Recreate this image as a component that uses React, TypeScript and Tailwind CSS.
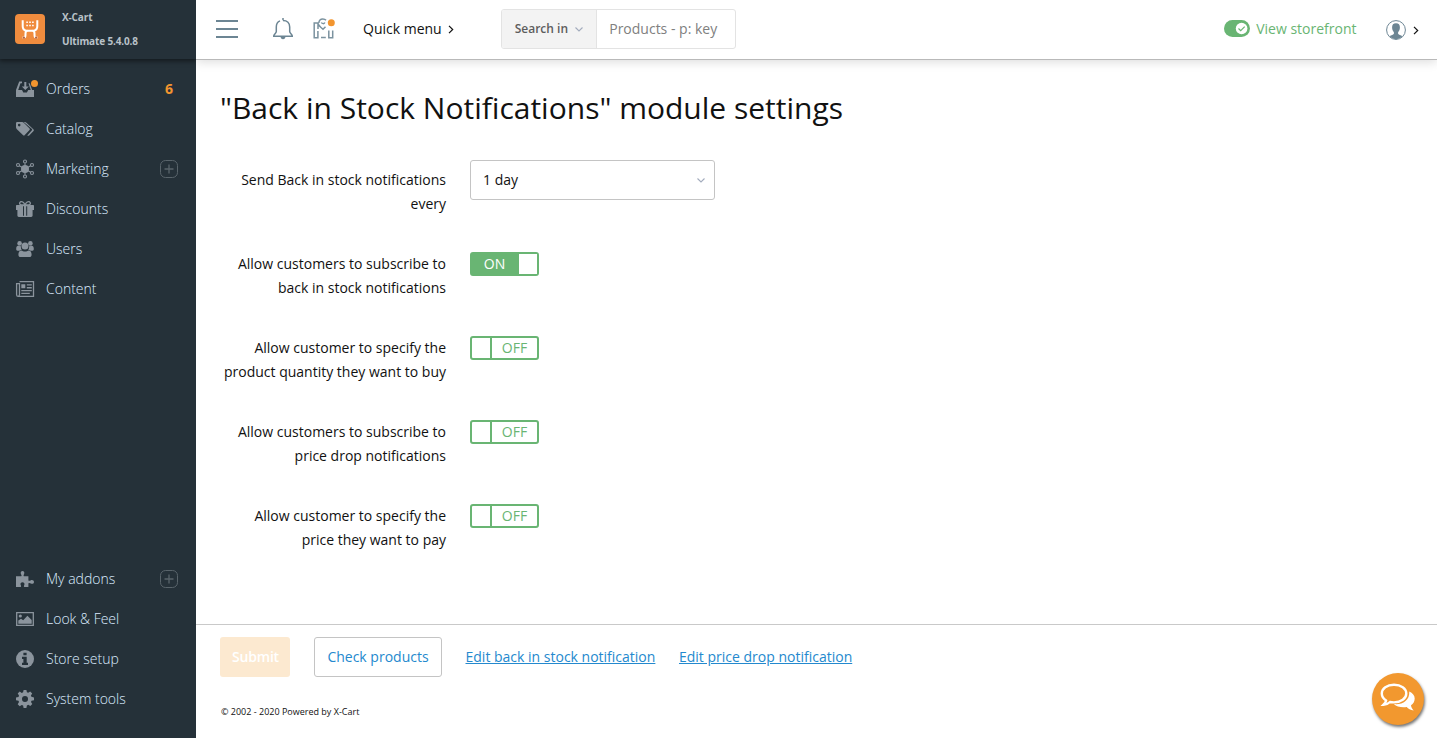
import React from "react";

type IconProps = { children: React.ReactNode };

const Glyph = ({ children }: IconProps) => (
  <svg width="18" height="18" viewBox="0 0 18 18" fill="#8b949d" className="block shrink-0 overflow-visible">
    {children}
  </svg>
);

const OrdersIcon = () => (
  <Glyph>
    <path d="M3.2 1.6H6v1.6H4.500L2.200 10H6l1.3 2.6h3.600L12.200 10H18v7H0v-7z" />
    <path d="M8.300 2h2v4.400h2.500L9.300 9.900 5.800 6.400h2.500z" />
    <path d="M12.500 3.200h1.200L16.200 10h-1.500z" />
    <circle cx="18.500" cy="3.500" r="3.500" fill="#f2952f" />
  </Glyph>
);

const CatalogIcon = () => (
  <Glyph>
    <path
      fillRule="evenodd"
      d="M0 3.200C0 2.400.7 2 1.400 2H6c.8 0 1.400.3 2 .9l5.300 5.300c.7.700.7 1.300 0 2L8.800 15c-.6.700-1.300.7-1.900 0L.9 9.200C.3 8.600 0 8 0 7.200zM3.200 3.800a1.300 1.300 0 1 0 0 2.600 1.300 1.300 0 0 0 0-2.600z"
    />
    <path d="M7.700 2h1c.8 0 1.400.3 2 .9l6.600 6.300c.8.700.8 1.300 0 2l-4.100 4.200c-.7.600-1.300.6-1.900 0l4.600-5.100c.4-.5.4-.9 0-1.300z" />
  </Glyph>
);

const MarketingIcon = () => (
  <Glyph>
    <circle cx="9" cy="9" r="4" />
    <g fill="none" stroke="#8b949d" strokeWidth="1.100">
      <path d="M9 3.300v11.400M3.300 5.800l11.400 6.400M3.300 12.200l11.400-6.400" />
      <circle cx="9" cy="1.500" r="1.500" />
      <circle cx="9" cy="16.500" r="1.500" />
      <circle cx="2" cy="5" r="1.500" />
      <circle cx="16" cy="5" r="1.500" />
      <circle cx="2" cy="13" r="1.500" />
      <circle cx="16" cy="13" r="1.500" />
    </g>
  </Glyph>
);

const DiscountsIcon = () => (
  <Glyph>
    <path d="M1 5h16c.6 0 1 .4 1 1v4h-1.400v5.600c0 .8-.6 1.400-1.400 1.400H2.800c-.8 0-1.400-.6-1.400-1.400V10H0V6c0-.6.4-1 1-1z" />
    <path d="M7 6.300h1v9.400H7zM10.200 6.300h1v9.400h-1z" fill="#253139" />
    <path d="M9 5C7.800 2 5.800 1 4.300 1.900 3 2.900 3.500 5 5.500 5zM9 5c1.200-3 3.200-4 4.700-3.100C15 2.900 14.500 5 12.500 5z" fill="none" stroke="#8b949d" strokeWidth="1.300" />
  </Glyph>
);

const UsersIcon = () => (
  <Glyph>
    <circle cx="3.600" cy="3.400" r="2.300" />
    <circle cx="14.400" cy="3.400" r="2.300" />
    <circle cx="9" cy="6" r="3.500" />
    <path d="M.2 8.800c0-2 .8-3 2-3 1 0 1.900.6 2.700.3-.1 2 .3 3 1 3.700-1 0-1.800.3-2.400.9H1.500C.7 10.700.200 10.200.2 8.800zM17.800 8.800c0-2-.8-3-2-3-1 0-1.900.6-2.700.3.1 2-.3 3-1 3.700 1 0 1.800.3 2.400.9h2c.8 0 1.300-.5 1.300-1.900zM5.300 10.500c1 .5 2.300 1 3.700 1s2.700-.5 3.700-1c2 0 2.900 1.700 2.900 4.200 0 1.400-.9 2.300-2.200 2.300H4.600c-1.300 0-2.200-.9-2.200-2.300 0-2.500.9-4.200 2.900-4.200z" />
  </Glyph>
);

const ContentIcon = () => (
  <Glyph>
    <path d="M3.500 1.700h14v14.600H2.200C1.200 16.300.6 15.600.6 14.700V3.700h2.900v10.800c0 1-.5 1.700-1.300 1.700" fill="none" stroke="#8b949d" strokeWidth="1.300" />
    <path d="M5.300 4.200h4v4.100h-4zM10.800 4.200h5v1.300h-5zM10.800 7.100h5v1.300h-5zM5.300 9.900h10.500v1.300H5.300zM5.300 12.700h8.500V14H5.300z" />
  </Glyph>
);

const AddonsIcon = () => (
  <Glyph>
    <path d="M0 6.200h5.300c.6-.6.200-1.300-.4-2.200-.6-1.400.2-2.900 1.600-2.900 1.500 0 2.300 1.500 1.600 2.900-.5.900-.8 1.600-.2 2.200h4.500v4.300c.7.700 1.500.3 2.500-.3 1.400-.7 3.100.1 3.100 1.700s-1.700 2.400-3.100 1.700c-1-.6-1.800-.9-2.500-.2V17H8.300c-.8-.7-.2-1.500.1-2.300.4-1.300-.5-2.400-1.900-2.400s-2.300 1.100-1.900 2.400c.3.800.9 1.600.1 2.300H0z" />
  </Glyph>
);

const LookIcon = () => (
  <Glyph>
    <path d="M.7 2.700h16.600v12.600H.7z" fill="none" stroke="#8b949d" strokeWidth="1.300" />
    <circle cx="4.300" cy="6" r="1.600" />
    <path d="M2.300 13.800v-3.200L5 8.700l2.200 1.500 4.200-4.500 4.300 4.200v3.900z" />
  </Glyph>
);

const InfoIcon = () => (
  <Glyph>
    <circle cx="9" cy="9" r="9" />
    <path d="M7.400 2.700h3.200v2.600H7.400zM6 6.700h4.700v6H12v2.200H6v-2.200h1.400v-3.800H6z" fill="#253139" />
  </Glyph>
);

const GearIcon = () => (
  <Glyph>
    <path
      fillRule="evenodd"
      d="M7.600 0h2.800l.5 2.300 1.300.5 2-1.300 2 2-1.300 2 .5 1.300 2.600.6v2.900l-2.500.5-.5 1.300 1.300 2-2 2-2-1.300-1.400.600-.5 2.600H7.600l-.5-2.500-1.400-.600-2 1.300-2-2 1.300-2.100-.5-1.300L0 10.300V7.500l2.500-.6.5-1.300-1.300-2 2-2 2 1.300 1.400-.6zM9 6a3 3 0 1 0 0 6 3 3 0 0 0 0-6z"
    />
  </Glyph>
);

const AddBadge = () => (
  <svg width="18" height="18" viewBox="0 0 18 18" className="block" fill="none" stroke="#59646b">
    <rect x="0.500" y="0.500" width="17" height="17" rx="5" />
    <path d="M9 4.500v9M4.500 9h9" strokeWidth="1.300" />
  </svg>
);

type Item = { label: string; icon: React.ReactNode; count?: string; add?: boolean };

const mainItems: Item[] = [
  { label: "Orders", icon: <OrdersIcon />, count: "6" },
  { label: "Catalog", icon: <CatalogIcon /> },
  { label: "Marketing", icon: <MarketingIcon />, add: true },
  { label: "Discounts", icon: <DiscountsIcon /> },
  { label: "Users", icon: <UsersIcon /> },
  { label: "Content", icon: <ContentIcon /> },
];

const bottomItems: Item[] = [
  { label: "My addons", icon: <AddonsIcon />, add: true },
  { label: "Look & Feel", icon: <LookIcon /> },
  { label: "Store setup", icon: <InfoIcon /> },
  { label: "System tools", icon: <GearIcon /> },
];

const NavList = ({ items }: { items: Item[] }) => (
  <ul>
    {items.map((item) => (
      <li key={item.label} className="flex h-10 items-center pr-[18px] pl-4">
        {item.icon}
        <span className="ml-3 flex-1 text-sm font-light text-[#dcecff]">{item.label}</span>
        {item.count && <span className="mr-[5px] text-sm font-bold text-[#f2952f]">{item.count}</span>}
        {item.add && <AddBadge />}
      </li>
    ))}
  </ul>
);

const Sidebar = () => (
  <aside className="relative z-10 flex w-[196px] shrink-0 flex-col overflow-hidden bg-[#253139]">
    <div className="flex h-[59px] shrink-0 items-center pl-[15px] shadow-[0_1px_5px_1px_rgba(0,0,0,0.5)]">
      <svg width="30" height="30" viewBox="0 0 30 30" className="-mt-px block">
        <rect width="30" height="30" rx="4" fill="#f08c3e" />
        <g fill="none" stroke="#fff" strokeWidth="2">
          <path d="M7.700 6.300v6c0 2.600 1.200 4 3.500 4.500h7.600c2.300-.5 3.500-1.900 3.500-4.500v-6" />
          <path d="M7.600 23.500h1.200c1.400 0 1.700-1 1.700-2.500v-1.500c0-1.600.6-2.700 2-2.700M22.400 23.500h-1.200c-1.400 0-1.700-1-1.700-2.500v-1.500c0-1.600-.6-2.700-2-2.700" />
        </g>
        <path d="M11.300 7.500h1.600v1.500h-1.600zM14.200 7.500h1.600v1.500h-1.600zM17.100 7.500h1.600v1.500h-1.600zM11.300 10.700h1.600v1.500h-1.600zM14.200 10.700h1.600v1.500h-1.600zM17.100 10.700h1.600v1.500h-1.600z" fill="#fff" />
        <circle cx="8.900" cy="23.700" r="1.100" fill="#b0603f" />
        <circle cx="21.100" cy="23.700" r="1.100" fill="#b0603f" />
      </svg>
      <div className="mb-[2px] ml-[17px] text-[10px] leading-6 font-bold tracking-[-0.14px] text-[#b9c1c8]">
        <div>X-Cart</div>
        <div>Ultimate 5.4.0.8</div>
      </div>
    </div>
    <nav className="flex flex-1 flex-col justify-between pt-[10px] pb-[19px]">
      <NavList items={mainItems} />
      <NavList items={bottomItems} />
    </nav>
  </aside>
);

const ChevronDown = () => (
  <svg width="8" height="5" viewBox="0 0 8 5" fill="none" stroke="#a3acbd" strokeWidth="1.100" className="block">
    <path d="M.5.500 4 4 7.500.5" />
  </svg>
);

const ChevronRight = () => (
  <svg width="6" height="9" viewBox="0 0 6 9" fill="none" stroke="#111" strokeWidth="1.200" className="block">
    <path d="M1 .8 4.700 4.500 1 8.200" />
  </svg>
);

const TopBar = () => (
  <header className="flex h-[60px] shrink-0 items-center border-b border-[#b9b9b9] pr-[18px] pb-[2px] pl-5 shadow-[0_2px_10px_rgba(0,0,0,0.14)]">
    <svg width="22" height="18" viewBox="0 0 22 18" className="block" stroke="#6c8593" strokeWidth="1.800">
      <path d="M0 1h22M0 9h22M0 17h22" />
    </svg>
    <svg width="20" height="22" viewBox="0 0 20 22" className="ml-[35px] block" fill="none" stroke="#6c8593" strokeWidth="1.500">
      <path d="M10 0v2.300M7 2.900C4.500 4 3.300 6.200 3.300 9v4.500c0 2-2.300 2.500-2.600 4.700h18.600c-.3-2.200-2.600-2.700-2.600-4.700V9c0-3.800-2.500-6.600-6.700-6.600" />
      <path d="M7.500 18.500c.2 1.900 1 2.700 2.500 2.700s2.300-.8 2.500-2.700z" fill="#6c8593" stroke="none" />
    </svg>
    <svg width="22" height="21" viewBox="0 0 22 21" className="ml-5 block overflow-visible" fill="none" stroke="#7b929f" strokeWidth="1.500">
      <path d="M5 11V5H1.200v14.800h3.700V13M5 5.500c.3 1.500 1.500 2.700 3 4l2 1.800 2.500-2.500M5.800 5C6 2.500 7.500.9 9.800.9c1.500 0 2.500.4 3.200 1.300M8.300 4.500c.8 1.400 2.700 1.600 3.600 0M8 19.600h4.800M15.800 12.500v7.300h3.900v-7.300" />
      <circle cx="18.300" cy="4.700" r="3.500" fill="#f2952f" stroke="none" />
    </svg>
    <div className="ml-[28px] flex items-center text-sm text-[#111]">
      Quick menu
      <span className="mt-0.5 ml-[6px]">
        <ChevronRight />
      </span>
    </div>
    <div className="ml-[47px] flex h-10 w-[235px] overflow-hidden rounded-[3px] border border-[#e3e3e3]">
      <div className="flex w-[95px] items-center border-r border-[#e3e3e3] bg-[#f3f3f3] pl-[13px] text-xs font-semibold text-[#5d5d5d]">
        Search in
        <span className="ml-[7px] pt-0.5">
          <ChevronDown />
        </span>
      </div>
      <div className="flex items-center pl-[12.500px] text-sm text-[#808080]">Products - p: key</div>
    </div>
    <div className="ml-auto flex items-center text-sm text-[#69b573]">
      <svg width="26" height="17" viewBox="0 0 26 17" className="mr-[6px] block">
        <rect width="26" height="17" rx="8.500" fill="#69b573" />
        <circle cx="17.600" cy="8.500" r="5.800" fill="#fff" />
        <path d="m14.500 8.500 2.200 2.200 4-4" fill="none" stroke="#69b573" strokeWidth="1.200" />
      </svg>
      View storefront
    </div>
    <svg width="20" height="20" viewBox="0 0 20 20" className="mt-0.5 ml-[29.500px] block">
      <circle cx="10" cy="10" r="9.400" fill="#fff" stroke="#6c8593" />
      <path d="M10 3.300c2.700 0 4 1.500 3.900 4.200 0 2.200-.8 3.500-1.800 4.700v1.600c0 .8 3 1.400 4.300 2.500A9 9 0 0 1 10 19.400a9 9 0 0 1-6.400-3.100c1.300-1.100 4.300-1.700 4.300-2.500v-1.600c-1-1.200-1.800-2.500-1.800-4.700C6 4.800 7.300 3.300 10 3.300z" fill="#6c8593" />
    </svg>
    <span className="mt-[3px] ml-[7px]">
      <ChevronRight />
    </span>
  </header>
);

const Toggle = ({ on }: { on: boolean }) =>
  on ? (
    <div className="flex h-6 w-[69px] rounded-[3px] border-2 border-[#69b573] bg-[#69b573] text-sm leading-5 text-white">
      <span className="w-[47px] pr-0.5 text-center">ON</span>
      <span className="w-[18px] bg-white" />
    </div>
  ) : (
    <div className="flex h-6 w-[69px] rounded-[3px] border-2 border-[#69b573] bg-white text-sm leading-5 text-[#69b573]">
      <span className="w-5 border-r-2 border-[#69b573]" />
      <span className="flex-1 text-center">OFF</span>
    </div>
  );

const Row = ({ lines, children }: { lines: string[]; children: React.ReactNode }) => (
  <div className="flex h-[84px]">
    <div className="mr-6 w-[226px] pt-2 text-right text-sm leading-6 whitespace-nowrap text-[#111]">
      {lines.map((line) => (
        <div key={line}>{line}</div>
      ))}
    </div>
    {children}
  </div>
);

const toggles = [
  { lines: ["Allow customers to subscribe to", "back in stock notifications"], on: true },
  { lines: ["Allow customer to specify the", "product quantity they want to buy"], on: false },
  { lines: ["Allow customers to subscribe to", "price drop notifications"], on: false },
  { lines: ["Allow customer to specify the", "price they want to pay"], on: false },
];

export default function App() {
  return (
    <div className="relative flex h-[738px] w-[1437px] overflow-hidden bg-white font-['Open_Sans',sans-serif]">
      <Sidebar />
      <div className="flex flex-1 flex-col">
        <TopBar />
        <main className="flex-1 pl-6">
          <h1 className="pt-[28px] text-[30px] leading-10 text-[#111]">"Back in Stock Notifications" module settings</h1>
          <div className="mt-8">
            <Row lines={["Send Back in stock notifications", "every"]}>
              <div className="flex h-10 w-[245px] items-center justify-between rounded-[3px] border border-[#c4c4c4] pr-[9px] pl-3 text-sm text-[#111]">
                1 day
                <ChevronDown />
              </div>
            </Row>
            {toggles.map((t, i) => (
              <Row key={i} lines={t.lines}>
                <div className="pt-2">
                  <Toggle on={t.on} />
                </div>
              </Row>
            ))}
          </div>
        </main>
        <footer className="h-[114px] shrink-0 border-t border-[#c9c9c9] pt-3 pl-6">
          <div className="flex h-10 items-center text-sm text-[#2489ce]">
            <button className="h-10 w-[70px] rounded-[3px] bg-[#fce9d0] pl-px font-semibold tracking-[-0.2px] text-white">Submit</button>
            <button className="ml-6 h-10 w-32 rounded-[3px] border border-[#c4c4c4]">Check products</button>
            <a className="ml-[23.500px] underline">Edit back in stock notification</a>
            <a className="ml-[23.600px] underline">Edit price drop notification</a>
          </div>
          <div className="mt-[27px] pl-px text-[9px] leading-4 text-[#111]">© 2002 - 2020 Powered by X-Cart</div>
        </footer>
      </div>
      <div className="absolute top-[673px] left-[1372px] flex size-[52px] items-center justify-center rounded-full bg-[#f2982f] shadow-[1px_2px_3px_rgba(0,0,0,0.55)]">
        <svg width="36" height="29" viewBox="0 0 36 29" className="mb-[3px] block">
          <path d="M14 1.700C7 1.700 1.800 5.500 1.800 10.500c0 3.300 2 5.500 4.300 7-.2 1.700-1 2.700-2.600 4.200 3 0 4.800-1 6.500-2.700 1.200.3 2.600.4 4 .4 7 0 12.300-3.900 12.300-8.900S21 1.700 14 1.700z" fill="none" stroke="#fff" strokeWidth="2.400" />
          <path d="M29.300 8.500c3.300 1.500 5.400 4 5.400 7 0 3-1.400 5.200-3.700 6.800.2 2 1.200 3.400 2.700 5.200-3.200-.2-5.500-1.500-7-3.400-5 .8-10.200-.3-12.800-3C22 22 29.700 18 29.300 8.500z" fill="#fff" />
        </svg>
      </div>
    </div>
  );
}
